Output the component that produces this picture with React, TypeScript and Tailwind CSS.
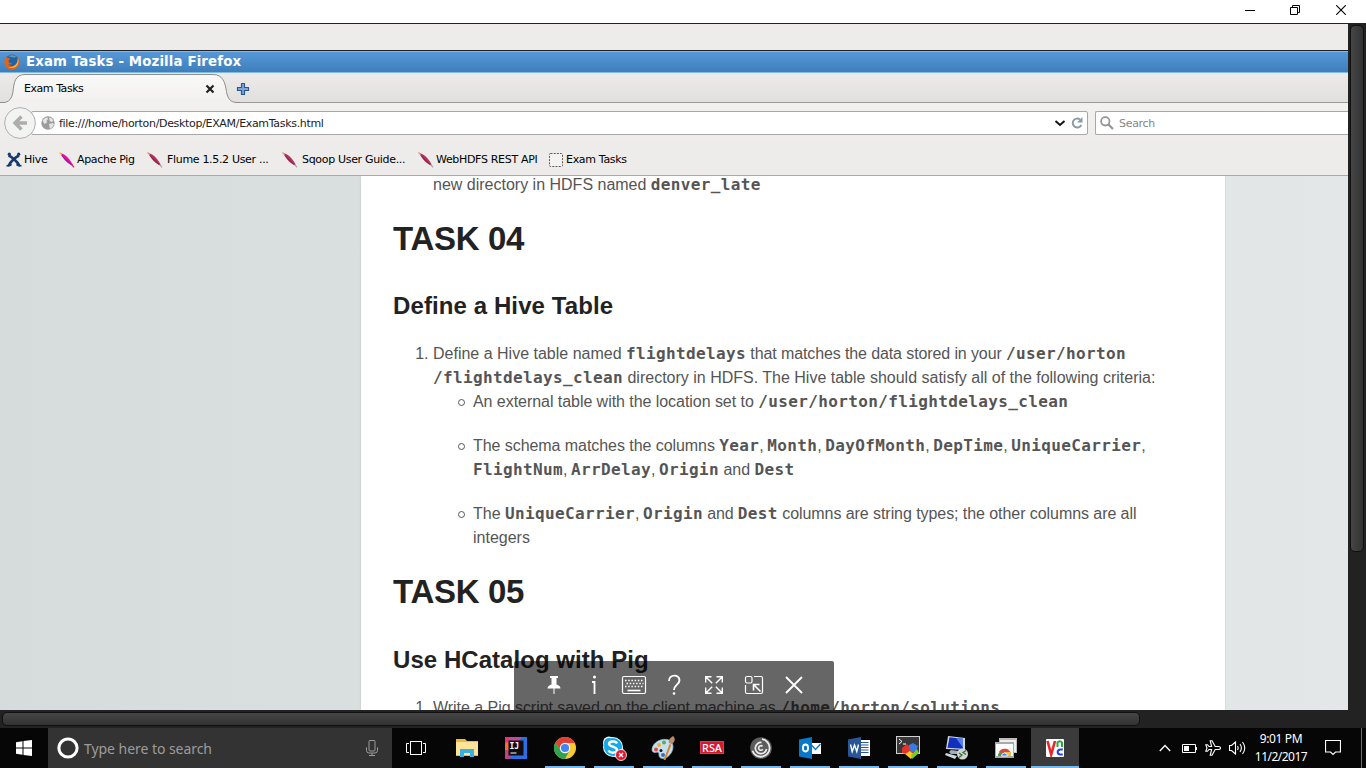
import type { ReactNode } from 'react';

function Code({ children }: { children: ReactNode }) {
  return <b className="font-['DejaVu_Sans_Mono',monospace] text-[16px] font-bold tracking-[0.367px]">{children}</b>;
}

function Comma() {
  return <span className="tracking-[-0.45px]">, </span>;
}

function FirefoxLogo() {
  return (
    <svg width="16" height="16" viewBox="0 0 16 16">
      <circle cx="8" cy="8" r="7.400" fill="#d9661f" />
      <circle cx="8" cy="6.600" r="6" fill="#2463a0" />
      <path d="M4.500 2.500c2-1.800 6-1.800 8 .5-1.500 0-2 .5-2 .8-2-.8-4-.7-6-1.300z" fill="#4ba3cf" />
      <path d="M1.200 2.500c.8.2 1.300.6 1.800 1.200 1.200-.2 2.500.3 3.200 1.200-.5.8-1.700.8-1.700 1.800.2 2 1.500 2.900 3.700 2.600-1 1.500-3 1.700-4.200.5 1 2.700 4.700 3.200 7.200 1.500 2-1.500 2.600-4.300 2-7 1.900 2.500 2.100 6 .2 8.500-3 3.500-8.500 3.500-11.300.2C0 10 .3 6 1.200 2.500z" fill="#df651c" />
      <path d="M14 4.500c1.200 3 .3 7-3 8.700-2 1-4.500.9-6.500-.2 4 .5 8-1.800 9-5.500z" fill="#f9b93a" />
    </svg>
  );
}

function Feather({ bright }: { bright?: boolean }) {
  return (
    <svg width="16" height="16" viewBox="0 0 16 16" className="shrink-0">
      <path d="M1.200 1C4.500 1.500 7.500 4 10 7c2 2.500 3.300 4.500 4 6.500-2.200-.6-5-1.800-7.200-4.200C4.200 6.500 2.500 3.500 1.200 1z" fill={bright ? '#ee0f9c' : '#b8325a'} />
      <path d="M3 3.500l9.500 9.500" stroke={bright ? '#4b2cb8' : '#6b2148'} strokeWidth="1" />
      <path d="M.5.5l2.200 2" stroke={bright ? '#f3c71c' : '#d9a07a'} strokeWidth="1.500" />
      <path d="M12.700 12.500l2.300 2.800" stroke={bright ? '#e21c49' : '#b5a3a8'} strokeWidth="1.300" />
    </svg>
  );
}

function HiveIcon() {
  return (
    <svg width="16" height="16" viewBox="0 0 16 16" fill="none" stroke="#15396b" className="shrink-0">
      <path d="M2.500 3.500c3 1 8.500 5.500 10.800 10" strokeWidth="2.600" />
      <path d="M13 3.500C10 5 4.500 9.500 2.800 13.500" strokeWidth="2.600" />
      <path d="M.5 13.500c2 .8 4-.2 5-1.200M15.500 13.500c-2 .8-4-.2-5-1.200" strokeWidth="1.800" />
      <circle cx="3.300" cy="2.200" r="1.600" fill="#15396b" stroke="none" />
      <circle cx="12.700" cy="2.200" r="1.600" fill="#15396b" stroke="none" />
    </svg>
  );
}

function BlankPage() {
  return (
    <svg width="14" height="14" viewBox="0 0 14 14">
      <rect x=".5" y=".5" width="13" height="13" rx="1" fill="#f3f3f1" stroke="#5a5a5a" strokeDasharray="2 1.200" />
    </svg>
  );
}

function Tabs() {
  return (
    <div className="relative h-[30px] shrink-0 border-b border-[#9a9a98] bg-gradient-to-b from-[#ecebe9] to-[#e1e0de]">
      <svg className="absolute top-0 left-0" width="240" height="30" viewBox="0 0 240 30">
        <defs>
          <linearGradient id="tab" x1="0" y1="0" x2="0" y2="1">
            <stop offset="0" stopColor="#f9f9f8" />
            <stop offset="1" stopColor="#f1f0ee" />
          </linearGradient>
        </defs>
        <path d="M0 29.500h3c6 0 9-4 10-11 1-9 2-17 12-17h188c10 0 12 8 13.500 17 1 7 4 11 10.500 11h3v1H0z" fill="url(#tab)" />
        <path d="M0 29.500h3c6 0 9-4 10-11 1-9 2-17 12-17h188c10 0 12 8 13.500 17 1 7 4 11 10.500 11h3" fill="none" stroke="#8e8e8c" />
      </svg>
      <div className="relative flex h-full items-center pl-6">
        <span className="w-[181px] pt-[3px] tracking-[-0.45px]">Exam Tasks</span>
        <svg width="10" height="10" viewBox="0 0 10 10" className="mt-0.5">
          <path d="M1.500 1.500l7 7M8.500 1.500l-7 7" stroke="#222" strokeWidth="2.200" />
        </svg>
        <svg width="14" height="14" viewBox="0 0 14 14" className="mt-0.5 ml-[21px]">
          <path d="M5.500 1.500h3v4h4v3h-4v4h-3v-4h-4v-3h4z" fill="#7ea6da" stroke="#2b568f" strokeWidth="1.200" strokeLinejoin="round" />
        </svg>
      </div>
    </div>
  );
}

function NavBar() {
  return (
    <div className="relative flex h-[42px] shrink-0 items-start bg-gradient-to-b from-[#f2f1ef] to-[#edecea] pt-2">
      <div className="ml-[31px] flex h-6 w-[1057px] items-center rounded-[2px] border border-[#a8a8a6] bg-white pl-[9px]">
        <svg width="14" height="14" viewBox="0 0 14 14">
          <circle cx="7" cy="7" r="6.700" fill="#9c9c9c" />
          <path d="M1.500 4.500L4 2l2.500-.5L7 3 5.500 5 6 6.500 3.500 8zM8 1.500l3 1 1.500 2.500L10 6 8.500 4.500zM8 8l3.500-1 1.500 1-1.500 3L9 13 8.500 10.500z" fill="#e4e4e4" />
        </svg>
        <span className="ml-1 w-[995px] pt-0.5 tracking-[-0.32px] text-[#222]">file:///home/horton/Desktop/EXAM/ExamTasks.html</span>
        <svg width="12" height="8" viewBox="0 0 12 8" className="shrink-0">
          <path d="M1.500 2L6 6l4.500-4" fill="none" stroke="#111" strokeWidth="1.900" />
        </svg>
        <svg width="14" height="14" viewBox="0 0 14 14" className="ml-[4px] shrink-0">
          <path d="M10 3.500A4.500 4.500 0 1 0 11.300 9" fill="none" stroke="#8c9aa8" strokeWidth="2" />
          <path d="M12.500 1v5.500H7z" fill="#8c9aa8" />
        </svg>
      </div>
      <svg className="absolute top-1 left-1" width="33" height="33" viewBox="0 0 33 33">
        <circle cx="16" cy="16" r="15.400" fill="#f3f3f2" stroke="#acb0b4" />
        <path d="M17.500 9.500L11 16l6.500 6.500M11 16h12" fill="none" stroke="#adadad" strokeWidth="3.400" />
      </svg>
      <div className="ml-[7px] flex h-6 flex-1 items-center rounded-l-[2px] border border-r-0 border-[#a8a8a6] bg-white pl-1">
        <svg width="14" height="14" viewBox="0 0 14 14">
          <circle cx="5.300" cy="5.300" r="4.200" fill="none" stroke="#959595" strokeWidth="1.800" />
          <path d="M8.500 8.500l4.500 4.500" stroke="#959595" strokeWidth="2.200" />
        </svg>
        <span className="ml-[5px] pt-0.5 tracking-[-0.3px] text-[#858585]">Search</span>
      </div>
    </div>
  );
}

function Bookmark({ icon, label, box, gap }: { icon: ReactNode; label: string; box: string; gap: string }) {
  return (
    <div className={`flex items-center ${box} ${gap}`}>
      {icon}
      <span className="pt-0.5 tracking-[-0.32px] whitespace-nowrap">{label}</span>
    </div>
  );
}

function Bookmarks() {
  return (
    <div className="flex h-[31px] shrink-0 items-center border-b border-[#a9a9a7] bg-[#edecea] pb-px">
      <Bookmark box="w-[53px] pl-1.5" gap="gap-[2px]" icon={<HiveIcon />} label="Hive" />
      <Bookmark box="w-[89px] pl-1.5" gap="gap-[2px]" icon={<Feather bright />} label="Apache Pig" />
      <Bookmark box="w-[135px] pl-[5px]" gap="gap-[4px]" icon={<Feather />} label="Flume 1.5.2 User ..." />
      <Bookmark box="w-[136px] pl-[5px]" gap="gap-[4px]" icon={<Feather />} label="Sqoop User Guide..." />
      <Bookmark box="w-[136px] pl-[5px]" gap="gap-[2px]" icon={<Feather />} label="WebHDFS REST API" />
      <Bookmark box="" gap="gap-[3px]" icon={<BlankPage />} label="Exam Tasks" />
    </div>
  );
}

function Item({ children }: { children: ReactNode }) {
  return (
    <li className="flex items-start">
      <span className="mt-[9px] mr-[8px] -ml-[15px] h-[7px] w-[7px] shrink-0 rounded-full border border-[#555]" />
      <div>{children}</div>
    </li>
  );
}

function Document() {
  return (
    <div className="flex min-h-0 flex-1 overflow-hidden bg-gradient-to-r from-[#d6dcdc] to-[#e3e7e8]">
      <div className="ml-[361px] h-[560px] w-[864px] bg-white px-8 font-['Liberation_Sans',sans-serif] text-[16px] leading-6 whitespace-nowrap text-[#555] shadow-[0_0_2px_rgba(0,0,0,0.12)]">
        <p className="-mt-[3px] pl-10">new directory in HDFS named <Code>denver_late</Code></p>
        <h1 className="mt-[22px] text-[33px] leading-10 font-bold tracking-[-0.3px] text-[#222]">TASK 04</h1>
        <h2 className="mt-[31px] text-[24px] leading-8 font-bold tracking-[0.1px] text-[#222]">Define a Hive Table</h2>
        <ol className="mt-5 list-decimal pl-10">
          <li>
            Define a Hive table named <Code>flightdelays</Code><span className="tracking-[-0.11px]"> that matches the data stored in your </span><Code>/user/horton<br />/flightdelays_clean</Code> directory in HDFS. The Hive table should satisfy all of the following criteria:
            <ul className="flex flex-col gap-5 pl-10">
              <Item><span className="tracking-[-0.05px]">An external table with the location set to </span><Code>/user/horton/flightdelays_clean</Code></Item>
              <Item>
                <span className="tracking-[-0.06px]">The schema matches the columns </span><Code>Year</Code><Comma /><Code>Month</Code><Comma /><Code>DayOfMonth</Code><Comma /><Code>DepTime</Code><Comma /><Code>UniqueCarrier</Code>,<br />
                <Code>FlightNum</Code><Comma /><Code>ArrDelay</Code><Comma /><Code>Origin</Code> and <Code>Dest</Code>
              </Item>
              <Item>The <Code>UniqueCarrier</Code><Comma /><Code>Origin</Code><span className="tracking-[-0.15px]"> and </span><Code>Dest</Code><span className="tracking-[-0.065px]"> columns are string types; the other columns are all</span><br />integers</Item>
            </ul>
          </li>
        </ol>
        <h1 className="mt-[22px] text-[33px] leading-10 font-bold tracking-[-0.3px] text-[#222]">TASK 05</h1>
        <h2 className="mt-8 text-[24px] leading-8 font-bold tracking-[0.05px] text-[#222]">Use HCatalog with Pig</h2>
        <ol className="mt-5 list-decimal pl-10">
          <li><span className="tracking-[-0.04px]">Write a Pig script saved on the client machine as </span><Code>/home/horton/solutions</Code></li>
        </ol>
      </div>
    </div>
  );
}

function SessionToolbar() {
  return (
    <div className="absolute bottom-0 left-[514px] flex h-[49px] w-80 items-center justify-center gap-[14px] rounded-t-[2px] bg-black/60 pb-0.5">
      <svg width="26" height="26" viewBox="0 0 26 26"><path d="M9 4h8v2h-1.500v6.500c2.500.7 4 2 4 4h-6V22h-1v-5.500h-6c0-2 1.500-3.300 4-4V6H9z" fill="#fff" /></svg>
      <svg width="26" height="26" viewBox="0 0 26 26"><circle cx="13.500" cy="5" r="1.500" fill="#fff" /><path d="M11 10h2.500V22" fill="none" stroke="#fff" strokeWidth="1.800" /></svg>
      <svg width="26" height="26" viewBox="0 0 26 26" fill="none" stroke="#fff">
        <rect x="1.500" y="4.500" width="23" height="17" rx="1.500" strokeWidth="1.200" />
        <path d="M4 8.500h19M5.500 11.500h17M4 14.500h19" strokeWidth="1.700" strokeDasharray="1.500 1.700" />
        <path d="M6.500 18.500h13" strokeWidth="1.600" />
      </svg>
      <svg width="26" height="26" viewBox="0 0 26 26"><path d="M8 9c0-7 10.500-7 10.500-.8 0 4.300-5.500 4.600-5.500 9.800" fill="none" stroke="#fff" strokeWidth="1.900" /><circle cx="13" cy="21.500" r="1.300" fill="#fff" /></svg>
      <svg width="26" height="26" viewBox="0 0 26 26" fill="none" stroke="#fff" strokeWidth="1.400">
        <path d="M4.700 10.500V4.700h5.800M4.700 4.700l6.500 6.500M15.500 4.700h5.800v5.800M21.300 4.700l-6.500 6.500M4.700 15.500v5.800h5.800M4.700 21.300l6.500-6.500M21.300 15.500v5.800h-5.800M21.300 21.300l-6.500-6.500" />
      </svg>
      <svg width="26" height="26" viewBox="0 0 26 26" fill="none" stroke="#fff" strokeWidth="1.200">
        <path d="M13 4.500h7q1.500 0 1.500 1.500v14q0 1.500-1.500 1.500H6q-1.500 0-1.500-1.500v-7" />
        <rect x="4.500" y="4.500" width="6.500" height="6.500" rx="1.500" />
        <path d="M12.500 18.500v-6h6M12.500 12.500l7 7" strokeWidth="1.600" />
      </svg>
      <svg width="26" height="26" viewBox="0 0 26 26"><path d="M5 5l16 16M21 5L5 21" stroke="#fff" strokeWidth="1.800" /></svg>
    </div>
  );
}

function TaskItem({ children, open, active }: { children: ReactNode; open?: boolean; active?: boolean }) {
  return (
    <div className={`mr-px flex h-10 w-12 flex-col items-center ${active ? 'bg-[#3b3b3b]' : ''}`}>
      <div className="flex h-[38px] items-center justify-center pt-0.5">{children}</div>
      <div className={`h-0.5 ${active ? 'w-12' : 'w-10'} ${open ? 'bg-[#76b9ed]' : ''}`} />
    </div>
  );
}

function ChromeMark({ size }: { size: number }) {
  return (
    <svg width={size} height={size} viewBox="0 0 22 22">
      <circle cx="11" cy="11" r="11" fill="#fbc934" />
      <path d="M1.470 5.500A11 11 0 0 0 11 22l4.500-8.500L11 11 6.700 13.500z" fill="#2fa350" />
      <path d="M1.470 5.500A11 11 0 0 1 20.500 5.500L20.700 6H11L6.700 13.500z" fill="#e23f33" />
      <circle cx="11" cy="11" r="5.200" fill="#fff" />
      <circle cx="11" cy="11" r="4.100" fill="#4285f4" />
    </svg>
  );
}

function Taskbar() {
  return (
    <div className="flex h-10 shrink-0 bg-[#060606] font-['Noto_Sans',sans-serif]">
      <div className="flex w-12 items-center justify-center">
        <svg width="16" height="16" viewBox="0 0 16 16" fill="#fff"><path d="M0 2.200l6.500-.9v6.200H0zM7.500 1.100L16 0v7.500H7.500zM0 8.500h6.500v6.200L0 13.800zM7.500 8.500H16V16l-8.500-1.100z" /></svg>
      </div>
      <div className="flex w-[344px] items-center bg-[#333]">
        <svg width="22" height="22" viewBox="0 0 22 22" className="ml-[9px]"><circle cx="11" cy="11" r="9.100" fill="none" stroke="#fff" strokeWidth="3" /></svg>
        <span className="ml-[5px] w-[282px] text-[14px] tracking-[-0.05px] text-[#9c9c9c]">Type here to search</span>
        <svg width="12" height="16" viewBox="0 0 12 16" fill="none" stroke="#9c9c9c"><rect x="3" y=".5" width="6" height="10.500" rx="1" /><path d="M.5 7.500v3q0 2.500 2.500 2.500h6q2.500 0 2.500-2.500v-3M6 13v2.500M3 15.500h6" /></svg>
      </div>
      <div className="flex w-[51px] items-center pl-[14px]">
        <svg width="20" height="14" viewBox="0 0 20 14" fill="none" stroke="#fff"><rect x="4.500" y=".5" width="11" height="13" /><path d="M3 2.500H.5v9H3M17 2.500h2.500v9H17" /></svg>
      </div>
      <TaskItem>
        <svg width="22" height="18" viewBox="0 0 22 18"><path d="M0 0h9l2 2h11v15H0z" fill="#e8ba45" /><path d="M0 3h22v13H0z" fill="#ffe497" /><path d="M4 18v-8h14v8h-4v-4H8v4z" fill="#37afe1" /></svg>
      </TaskItem>
      <TaskItem>
        <svg width="22" height="22" viewBox="0 0 22 22">
          <path d="M0 0h15v22H0z" fill="#f52e6d" /><path d="M9 0h13v22H5z" fill="#2871e4" /><path d="M4 0h13l-5 6H3z" fill="#c24a9c" /><path d="M0 11l7 2-2 9H0z" fill="#b8457d" /><path d="M0 6l6-2-2 9H0z" fill="#f96c38" />
          <rect x="3.500" y="3.500" width="15" height="15" fill="#100c12" />
          <path d="M5.500 16h6" stroke="#fff" />
          <text x="4.500" y="12" fill="#fff" fontSize="8" fontWeight="700" fontFamily="DejaVu Sans Mono">IJ</text>
        </svg>
      </TaskItem>
      <TaskItem open><ChromeMark size={22} /></TaskItem>
      <TaskItem open>
        <svg width="26" height="26" viewBox="0 0 26 26">
          <circle cx="8" cy="7.500" r="6" fill="#eaf8ff" /><circle cx="16" cy="16" r="6.500" fill="#eaf8ff" /><circle cx="12" cy="12" r="10" fill="#eaf8ff" />
          <circle cx="8" cy="8" r="5" fill="#14a9ea" /><circle cx="12" cy="12" r="9" fill="#14a9ea" />
          <path d="M16 8.500C15 5.500 8 6 8 9s8 2.500 8 6c0 3.500-7.200 3.500-8.400.4" fill="none" stroke="#fff" strokeWidth="2.400" />
          <circle cx="20" cy="20" r="5.500" fill="#e11b32" stroke="#fff" strokeWidth=".8" /><path d="M18 18l4 4M22 18l-4 4" stroke="#fff" strokeWidth="1.300" />
        </svg>
      </TaskItem>
      <TaskItem open>
        <svg width="24" height="24" viewBox="0 0 24 24">
          <path d="M1 13C2 6 11 1.500 18 4c6 3 5 12-1 16.500-5 3.500-9 2-9-1.500s-1.500-2.500-4-2.500-3-1.500-3-3.500z" fill="#c4dff2" stroke="#8eb4d0" strokeWidth=".7" />
          <circle cx="5" cy="13.500" r="2" fill="#dc4c3c" /><circle cx="8" cy="9" r="2" fill="#f1ae3a" /><circle cx="13" cy="6.500" r="2" fill="#5aae48" /><circle cx="12" cy="19" r="2" fill="#3771be" /><circle cx="10" cy="14.500" r="1.500" fill="#161616" />
          <path d="M12.500 24l6-16 2 .7L14.500 24z" fill="#d58832" /><path d="M18 7c-1-3 1-5 4-7 2.500 2 2.500 6-1.500 8z" fill="#b98a66" />
        </svg>
      </TaskItem>
      <TaskItem open>
        <svg width="24" height="14" viewBox="0 0 24 14"><rect x=".5" y=".5" width="23" height="12" fill="#d31930" stroke="#e63a45" /><text x="2" y="10.500" fill="#fff" fontSize="10.500" fontFamily="Noto Sans" fontWeight="500" textLength="20" lengthAdjust="spacingAndGlyphs">RSA</text></svg>
      </TaskItem>
      <TaskItem open>
        <svg width="22" height="22" viewBox="0 0 22 22" fill="none" stroke="#eee"><circle cx="11" cy="11" r="10.800" fill="#5c5c5c" stroke="none" /><path d="M12 2.200a8.800 8.800 0 1 1-9.500 11.500" strokeWidth="1.800" /><path d="M11.500 5.500a5.600 5.600 0 1 0 5 6.500" strokeWidth="1.700" /><path d="M12.500 9.300a2.300 2.300 0 1 0 .3 3" strokeWidth="1.600" /></svg>
      </TaskItem>
      <TaskItem open>
        <svg width="22" height="22" viewBox="0 0 22 22"><path d="M11 6h11v11H11z" fill="#fff" /><path d="M12.500 8l4 4.500L21.500 7" fill="none" stroke="#0878c9" strokeWidth="1.300" /><path d="M0 2.500L13 0v22L0 19.500z" fill="#0878c9" /><ellipse cx="6.500" cy="11" rx="2.600" ry="3.500" fill="none" stroke="#fff" strokeWidth="1.800" /></svg>
      </TaskItem>
      <TaskItem open>
        <svg width="22" height="22" viewBox="0 0 22 22"><path d="M12 3h10v16H12z" fill="#fff" /><path d="M13 5.500h7.500M13 8h7.500M13 10.500h7.500M13 13h7.500M13 15.500h7.500" stroke="#2a5698" /><path d="M0 2.500L13 0v22L0 19.500z" fill="#2a5698" /><path d="M2.500 7.500l1.700 7L6.500 8l2.300 6.500 1.700-7" fill="none" stroke="#fff" strokeWidth="1.400" /></svg>
      </TaskItem>
      <TaskItem open>
        <svg width="24" height="24" viewBox="0 0 24 24"><rect x=".5" y=".5" width="23" height="17" fill="#383838" stroke="#d2d2d2" /><path d="M3 3l3 2.500L3 8M7 8h3" fill="none" stroke="#fff" /><path d="M6 12l5-4 3 3 3 1 1 4-5 4-3-2-4-1z" fill="#e03329" /><path d="M13 9l4-2 5 3-2 5-4 1-3-3z" fill="#377ce5" /><path d="M9 18l5-3 4 4-3 4z" fill="#fbc926" /><path d="M15 19l6-6 2 4-7 6z" fill="#76cd28" /></svg>
      </TaskItem>
      <TaskItem open>
        <svg width="24" height="24" viewBox="0 0 24 24"><path d="M3 0l17 2v12L1 13z" fill="#d1d7e2" /><path d="M4.500 1.200l13.500 1.500v10L2.500 11.800z" fill="#1130bd" /><path d="M11 2l7 .8v9z" fill="#5580ea" /><path d="M6 14l8 1 1 3-9 0-2-2z" fill="#9eafc0" /><path d="M1 17l11 3-2 3-10-4z" fill="#cfd6dc" /><circle cx="17.500" cy="18" r="5.500" fill="#d0d5ce" /><path d="M14 17l3 2-3 2.500M21 14.500l-3 2 3 2" fill="none" stroke="#336f38" strokeWidth="1.300" /></svg>
      </TaskItem>
      <TaskItem open>
        <svg width="22" height="20" viewBox="0 0 22 20"><path d="M4 0h18v15H4z" fill="#bbb" /><path d="M5 2h16v12H5z" fill="#eee" /><path d="M0 4h19v16H0z" fill="#aaa" /><path d="M1 6h17v12H1z" fill="#fff" /><path d="M3 18a6.500 6.500 0 0 1 13 0z" fill="#3b9e55" /><path d="M4 14a6.500 6.500 0 0 1 12 2H9z" fill="#dd493e" /><path d="M9 14h6.500q.8 2 .5 4h-6z" fill="#f3c33f" /><path d="M6.500 18a3 3 0 0 1 6 0z" fill="#4285f4" stroke="#fff" strokeWidth=".8" /></svg>
      </TaskItem>
      <TaskItem open active>
        <svg width="18" height="18" viewBox="0 0 18 18"><rect width="18" height="18" rx="1" fill="#fff" /><path d="M1.500 2l3.700 13.500L9 2" fill="none" stroke="#e7272a" strokeWidth="2.600" /><path d="M11.500 8V3.500q2.500-2.500 4.500 0V8" fill="none" stroke="#2ba640" strokeWidth="2" /><path d="M16.800 10.500h-2.500c-3.500.3-3.500 4.700 0 5h2.500" fill="none" stroke="#2743df" strokeWidth="2" /></svg>
      </TaskItem>
      <div className="ml-[79px] flex items-center">
        <svg width="12" height="8" viewBox="0 0 12 8"><path d="M.8 7L6 1.500 11.200 7" fill="none" stroke="#fff" strokeWidth="1.300" /></svg>
        <svg width="15" height="9" viewBox="0 0 15 9" className="ml-[11px]"><path d="M.5.5h13v8H.5zM14.500 3v3" fill="none" stroke="#fff" /><path d="M2 2h5v5H2z" fill="#fff" /></svg>
        <svg width="16" height="16" viewBox="0 0 16 16" className="ml-2" fill="none" stroke="#fff" strokeWidth="1.100"><path d="M15.500 8q0-1.500-2-1.500h-3.300L7 .7H5.200l1.400 5.800H4L2.500 4.700H.8L2 8 .8 11.300h1.700L4 9.500h2.600l-1.400 5.800H7l3.200-5.800h3.300q2 0 2-1.500z" /></svg>
        <svg width="17" height="14" viewBox="0 0 17 14" className="ml-2" fill="none" stroke="#fff"><path d="M.5 4.500h2L6.500 1v12l-4-3.500h-2zM8.500 5q1.200 2 0 4M11 3q2.800 4 0 8M13.500 1q4.500 6 0 12" strokeWidth="1.100" /></svg>
      </div>
      <div className="ml-[9px] flex w-[52px] flex-col items-center pt-[2px] text-[12px] leading-[18px] whitespace-nowrap text-white">
        <span className="tracking-[-0.35px]">9:01 PM</span>
        <span className="tracking-[-0.52px]">11/2/2017</span>
      </div>
      <svg width="16" height="16" viewBox="0 0 16 16" className="mt-3 ml-[18px]"><path d="M.5.500h15v11.500h-5L8 14.500 5.500 12h-5z" fill="none" stroke="#fff" strokeWidth="1.200" /></svg>
      <div className="ml-5 w-px bg-[#6d6d6d]" />
    </div>
  );
}

export default function App() {
  return (
    <div className="flex h-[768px] w-[1366px] flex-col overflow-hidden bg-white font-['DejaVu_Sans',sans-serif] text-[11px] text-black">
      <div className="flex h-[23px] shrink-0 items-start justify-end bg-white pt-[5px] pr-5">
        <svg width="10" height="10" viewBox="0 0 10 10"><path d="M0 5.500h10" stroke="#000" /></svg>
        <svg width="10" height="10" viewBox="0 0 10 10" className="ml-[35px]" fill="none" stroke="#000"><path d="M.5 2.500h7v7h-7zM2.500 2.500v-2h7v7h-2" /></svg>
        <svg width="10" height="10" viewBox="0 0 10 10" className="ml-9"><path d="M.2.200l9.600 9.600M9.800.2L.2 9.800" stroke="#000" strokeWidth="1.100" /></svg>
      </div>
      <div className="flex h-[687px] shrink-0 border-t border-[#222]">
        <div className="relative flex w-[1348px] flex-col">
          <div className="h-[26px] shrink-0 bg-[#edecea]" />
          <div className="flex h-[23px] shrink-0 items-center border-t border-[#1c2126] bg-[#7db8ef] py-px">
            <div className="flex h-5 w-full items-center bg-gradient-to-b from-[#5598da] to-[#3f7eb9] pl-1 text-[13.3px] font-bold text-white">
              <FirefoxLogo />
              <span className="ml-1.5 tracking-[0.15px]">Exam Tasks - Mozilla Firefox</span>
            </div>
          </div>
          <Tabs />
          <NavBar />
          <Bookmarks />
          <Document />
          <SessionToolbar />
        </div>
        <div className="w-[18px] bg-[#222] pt-px pl-0.5">
          <div className="h-[527px] w-[14px] rounded-[5px] border border-[#101010] bg-gradient-to-r from-[#464646] to-[#323232]" />
        </div>
      </div>
      <div className="h-[18px] shrink-0 bg-[#222] pt-0.5 pl-0.5">
        <div className="h-[14px] w-[1138px] rounded-[5px] border border-[#101010] bg-gradient-to-b from-[#464646] to-[#323232]" />
      </div>
      <Taskbar />
    </div>
  );
}
